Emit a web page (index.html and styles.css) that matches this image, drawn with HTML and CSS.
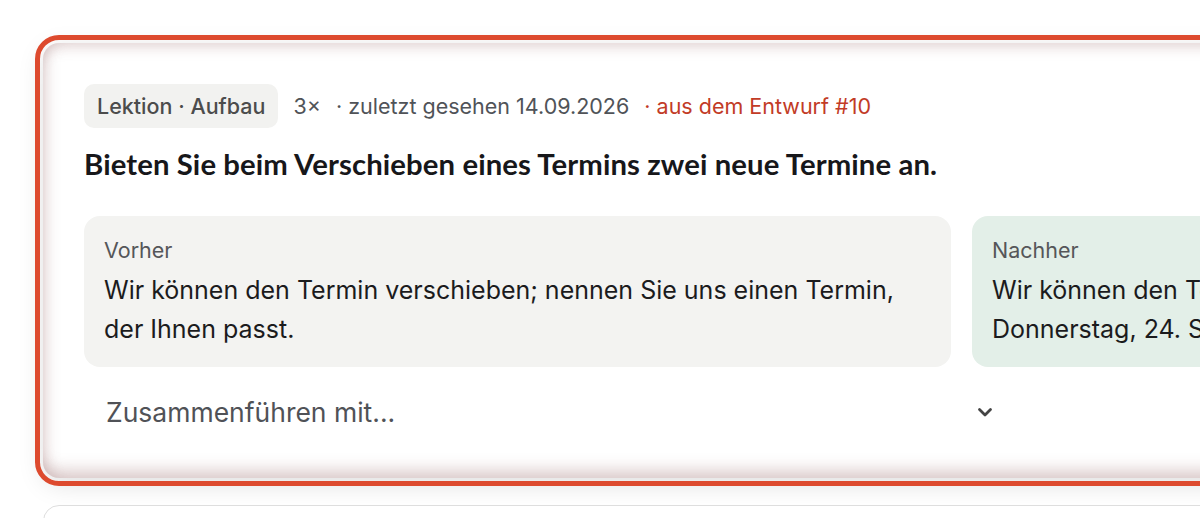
FILE: index.html
```html
<!DOCTYPE html>
<html lang="de">
<head>
<meta charset="utf-8">
<title>Lektion</title>
<link rel="stylesheet" href="styles.css">
</head>
<body>
<div class="page">
  <div class="list">
    <section class="card card-active">
      <div class="meta">
        <span class="tag">Lektion · Aufbau</span>
        <span class="count">3×</span>
        <span class="seen">· zuletzt gesehen 14.09.2026</span>
        <span class="source">· aus dem Entwurf #10</span>
      </div>
      <h2 class="title">Bieten Sie beim Verschieben eines Termins zwei neue Termine an.</h2>
      <div class="compare">
        <div class="box box-before">
          <div class="box-label">Vorher</div>
          <div class="box-text">Wir können den Termin verschieben; nennen Sie uns einen Termin, der Ihnen passt.</div>
        </div>
        <div class="box box-after">
          <div class="box-label">Nachher</div>
          <div class="box-text">Wir können den Termin verschieben: Dienstag, 22. Sept., oder Donnerstag, 24. Sept., jeweils 10 Uhr.</div>
        </div>
      </div>
      <div class="merge">
        <span class="merge-text">Zusammenführen mit...</span>
        <svg class="chev" width="16" height="12" viewBox="0 0 16 12"><path d="M2.5 3.5 L8 9 L13.5 3.5" fill="none" stroke="#444" stroke-width="2.8" stroke-linecap="round" stroke-linejoin="round"/></svg>
      </div>
    </section>
    <section class="card card-next"></section>
  </div>
</div>
</body>
</html>
```
FILE: styles.css
```css
html, body {
  margin: 0;
  padding: 0;
  background: #ffffff;
  overflow: hidden;
}
.page {
  padding: 43px 0 0 43px;
  font-family: Inter, "Liberation Sans", sans-serif;
}
.list {
  display: flex;
  flex-direction: column;
  gap: 27px;
  width: 1840px;
}
.card {
  border-radius: 16px;
  background: #fff;
  box-sizing: border-box;
}
.card-active {
  padding: 41px 40px 41px 41px;
  outline: 5px solid #dd4a2e;
  outline-offset: 3px;
  box-shadow: 0 6px 26px rgba(0,0,0,0.13), inset 0 -16px 16px -8px rgba(150,100,100,0.32), inset 0 12px 14px -8px rgba(150,100,100,0.26), inset 12px 0 14px -8px rgba(150,100,100,0.22);
}
.card-next {
  height: 80px;
  border: 1px solid #dedede;
}
.meta {
  display: flex;
  align-items: center;
  font-size: 21.5px;
  color: #505358;
}
.tag {
  background: #f2f2f0;
  border-radius: 10px;
  padding: 0 13px;
  height: 44px;
  line-height: 44px;
  font-weight: 500;
  color: #4c4c4c;
  margin-right: 15px;
}
.count {
  margin-right: 15px;
}
.seen {
  margin-right: 15px;
}
.source {
  color: #c23b26;
}
.title {
  margin: 19px 0 0 0;
  font-family: Lato, "Liberation Sans", sans-serif;
  font-weight: 700;
  font-size: 29.3px;
  line-height: 34px;
  color: #17171a;
  letter-spacing: 0.1px;
}
.compare {
  display: grid;
  grid-template-columns: 867px 867px;
  gap: 21px;
  margin-top: 35px;
}
.box {
  border-radius: 16px;
  padding: 21px 20px 18px 20px;
  min-height: 151px;
  box-sizing: border-box;
}
.box-before { background: #f3f3f1; }
.box-after { background: #e3efe8; }
.box-label {
  font-size: 21.5px;
  line-height: 26px;
  color: #555659;
}
.box-text {
  margin-top: 8px;
  font-size: 25px;
  line-height: 39px;
  color: #1b1b1d;
  max-width: 800px;
}
.merge {
  margin-top: 20px;
  width: 921px;
  height: 50px;
  display: flex;
  align-items: center;
  justify-content: space-between;
  padding: 0 12px 0 22px;
  box-sizing: border-box;
}
.merge-text {
  font-size: 26.5px;
  color: #505257;
}
.chev {
  display: block;
}
```
